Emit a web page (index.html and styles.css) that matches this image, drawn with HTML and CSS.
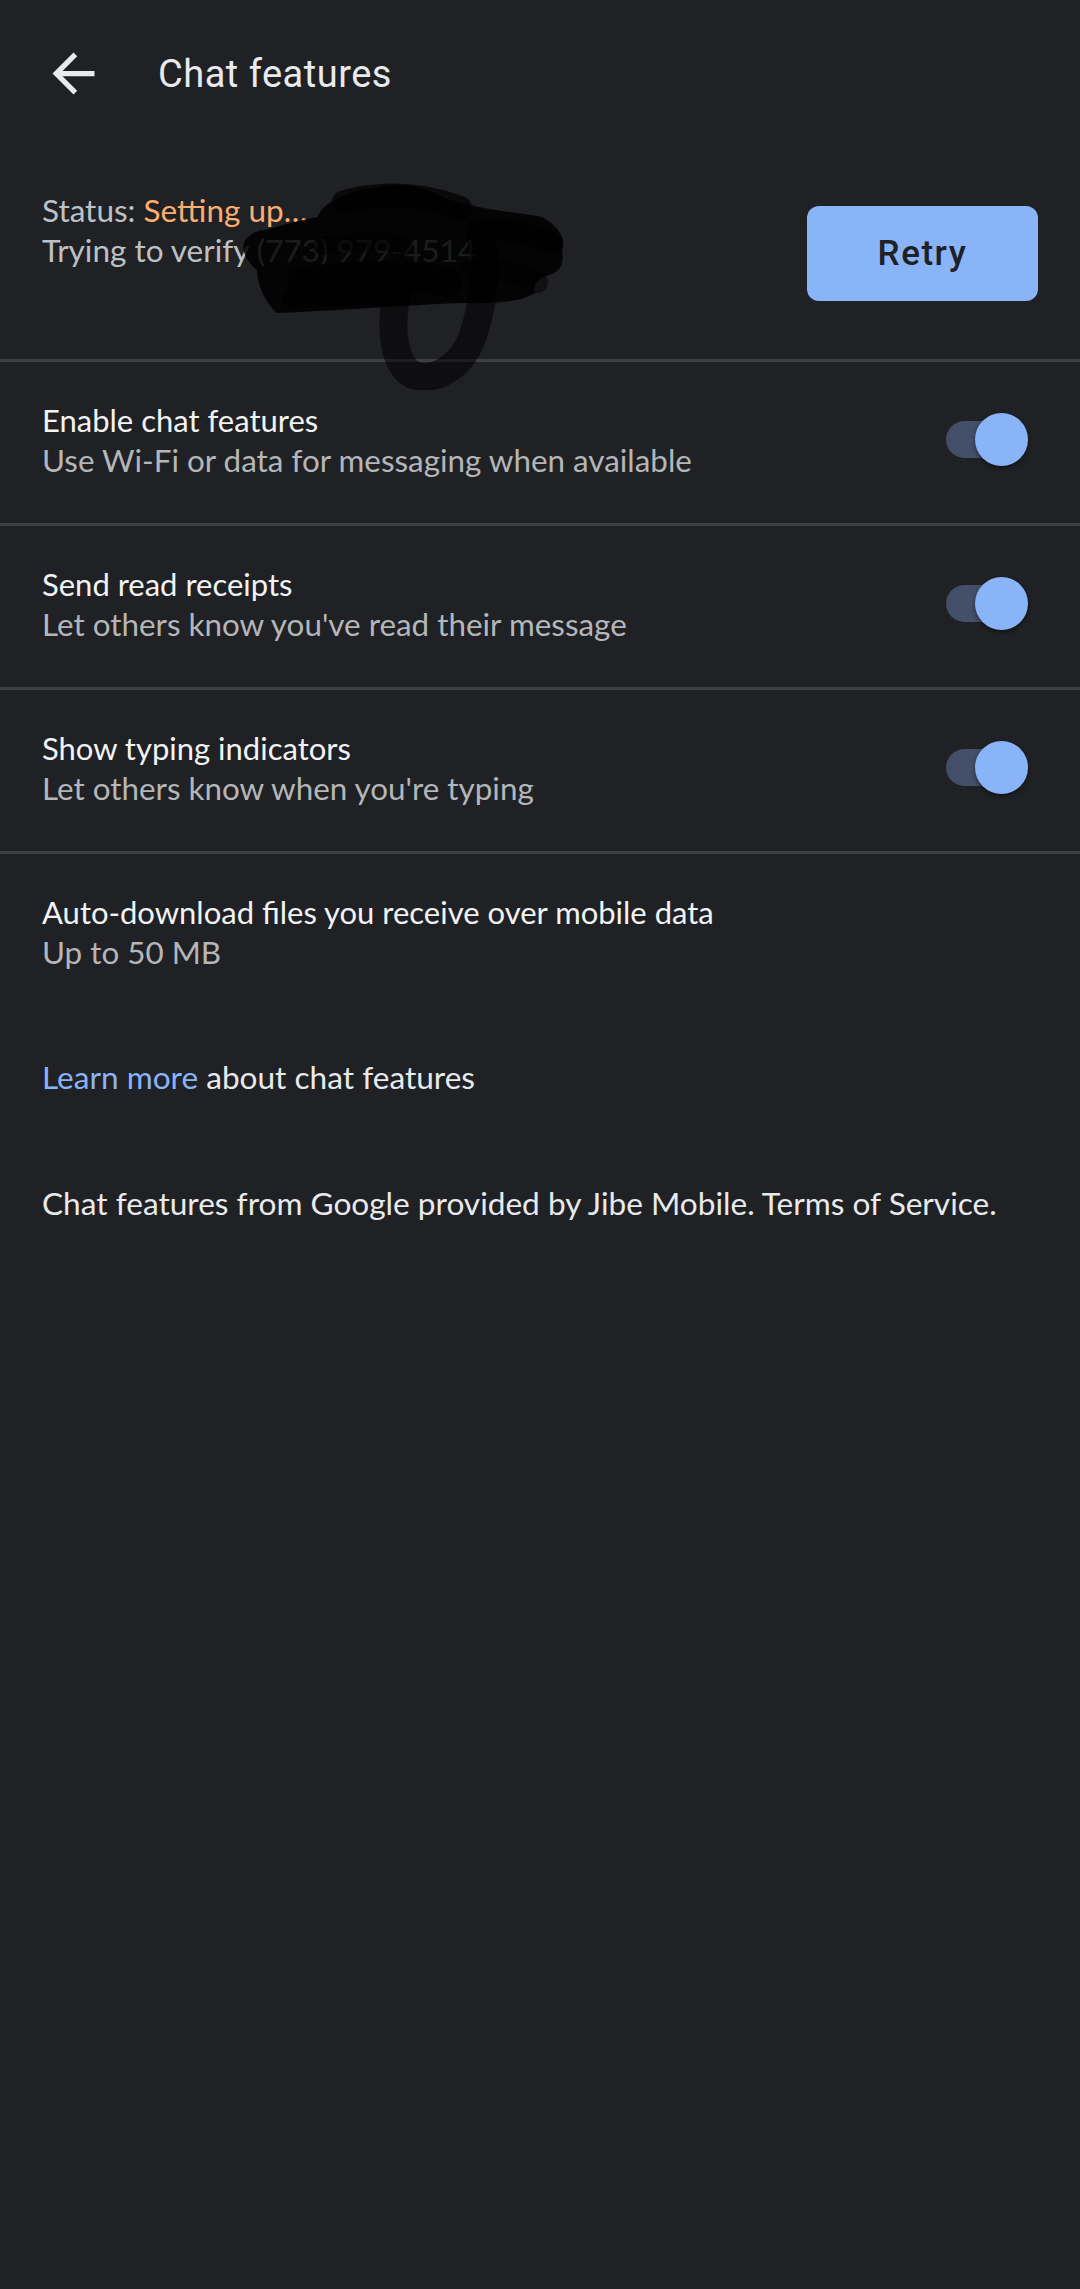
FILE: index.html
```html
<!DOCTYPE html>
<html lang="en">
<head>
  <meta charset="UTF-8" />
  <meta name="viewport" content="width=device-width, initial-scale=1.0" />
  <title>Chat features</title>
  <link rel="stylesheet" href="styles.css">
</head>
<body>
  <header class="appbar">
    <button class="back" aria-label="Back">
      <svg viewBox="0 0 24 24" width="63" height="63"><path fill="#e8eaed" d="M20 11H7.83l5.59-5.59L12 4l-8 8 8 8 1.41-1.41L7.83 13H20v-2z"/></svg>
    </button>
    <h1 class="title">Chat features</h1>
  </header>

  <section class="status">
    <div class="status-text">
      <p>Status: <span class="setting">Setting up…</span></p>
      <p>Trying to verify (773) 979-4514</p>
    </div>
    <button class="retry">Retry</button>

    <!-- redaction scribble over the number -->
    <svg class="scribble" viewBox="0 0 360 220" width="360" height="220">
      <path d="M86 47 C88 35 112 22 140 18 C160 13 185 12 213 28 C240 38 280 42 310 47 C325 55 335 68 330 80 C332 92 330 100 320 104 C305 108 300 115 303 123 C290 132 260 134 233 133 C190 134 120 140 45 143 C35 135 25 115 25 100 C15 92 8 80 13 70 C20 62 28 60 33 60 C50 55 70 50 86 47 Z" fill="#000" opacity="0.86"/>
      <g fill="none" stroke="#000" stroke-linecap="round" stroke-linejoin="round">
        <path d="M112 32 C150 22 190 24 228 38" stroke-width="24" opacity="0.7"/>
        <path d="M90 76 C140 70 180 72 170 78" stroke-width="18" opacity="0.5"/>
        <path d="M255 58 C280 60 305 66 320 74" stroke-width="22" opacity="0.6"/>
        <path d="M70 112 C120 104 170 104 215 112" stroke-width="30" opacity="0.75"/>
        <path d="M60 128 C100 126 140 124 170 126" stroke-width="20" opacity="0.6"/>
        <path d="M240 100 C270 100 290 104 305 112" stroke-width="22" opacity="0.5"/>
        <path d="M166 120 C158 152 160 186 176 202 C196 216 228 200 240 168 C252 134 256 96 248 64" stroke-width="28" opacity="0.55"/>
      </g>
    </svg>
  </section>

  <div class="row">
    <div class="row-text">
      <div class="row-title">Enable chat features</div>
      <div class="row-sub">Use Wi-Fi or data for messaging when available</div>
    </div>
    <div class="switch on"><span class="thumb"></span></div>
  </div>

  <div class="row">
    <div class="row-text">
      <div class="row-title">Send read receipts</div>
      <div class="row-sub">Let others know you've read their message</div>
    </div>
    <div class="switch on"><span class="thumb"></span></div>
  </div>

  <div class="row">
    <div class="row-text">
      <div class="row-title">Show typing indicators</div>
      <div class="row-sub">Let others know when you're typing</div>
    </div>
    <div class="switch on"><span class="thumb"></span></div>
  </div>

  <div class="row">
    <div class="row-text">
      <div class="row-title">Auto-download files you receive over mobile data</div>
      <div class="row-sub">Up to 50 MB</div>
    </div>
  </div>

  <div class="info">
    <p class="learn"><a href="#">Learn more</a> about chat features</p>
    <p class="legal">Chat features from Google provided by Jibe Mobile. Terms of Service.</p>
  </div>
</body>
</html>
```

FILE: styles.css
```css
body {
  margin: 0;
  padding: 0;
  background: #202124;
  color: #e8eaed;
  font-family: Lato, 'Noto Sans', sans-serif;
  width: 1080px;
  height: 2289px;
  overflow: hidden;
}

p {
  margin: 0;
}

.appbar {
  height: 147px;
  display: flex;
  align-items: center;
}

.back {
  background: none;
  border: none;
  padding: 0;
  margin-left: 42px;
  width: 63px;
  height: 63px;
  display: flex;
}

.title {
  margin: 0 0 0 53px;
  font-family: Roboto, 'Open Sans', sans-serif;
  font-weight: 400;
  font-size: 38px;
  letter-spacing: 0.5px;
  color: #e8eaed;
}

.status {
  position: relative;
  height: 212px;
  box-sizing: border-box;
  padding: 43px 42px 0 42px;
  display: flex;
  justify-content: space-between;
  align-items: flex-start;
}

.status-text {
  font-size: 31.5px;
  line-height: 40px;
  color: #bdc1c6;
}

.setting {
  color: #fcad70;
}

.retry {
  margin-top: 16px;
  width: 231px;
  height: 95px;
  border: none;
  border-radius: 12px;
  background: #8ab4f8;
  color: #202124;
  font-family: Roboto, 'Open Sans', sans-serif;
  font-weight: 500;
  font-size: 35px;
  letter-spacing: 1.5px;
}

.scribble {
  position: absolute;
  left: 232px;
  top: 23px;
  z-index: 2;
}

.row {
  height: 164px;
  box-sizing: border-box;
  border-top: 3px solid #3c4043;
  padding: 0 42px;
  display: flex;
  align-items: center;
  justify-content: space-between;
}

.row:last-of-type {
  border-bottom: 3px solid #3c4043;
}

.row-text {
  margin-top: -6px;
}

.row-title {
  font-size: 31px;
  line-height: 40px;
  color: #f1f3f4;
}

.row-sub {
  font-size: 31.4px;
  line-height: 40px;
  color: #b4b6b9;
}

.switch {
  position: relative;
  width: 82px;
  height: 53px;
  margin: -6px 10px 0 0;
}

.switch::before {
  content: "";
  position: absolute;
  left: 0;
  top: 8px;
  width: 76px;
  height: 37px;
  border-radius: 19px;
  background: #434f68;
}

.thumb {
  position: absolute;
  right: 0;
  top: 0;
  width: 53px;
  height: 53px;
  border-radius: 50%;
  background: #8ab4f8;
  box-shadow: 0 2px 4px rgba(0, 0, 0, 0.45);
}

.info {
  padding: 42px 42px 0 42px;
  font-size: 31.6px;
  line-height: 40px;
  color: #e8eaed;
}

.learn a {
  color: #8ab4f8;
  text-decoration: none;
}

.legal {
  margin-top: 86px;
}
```
